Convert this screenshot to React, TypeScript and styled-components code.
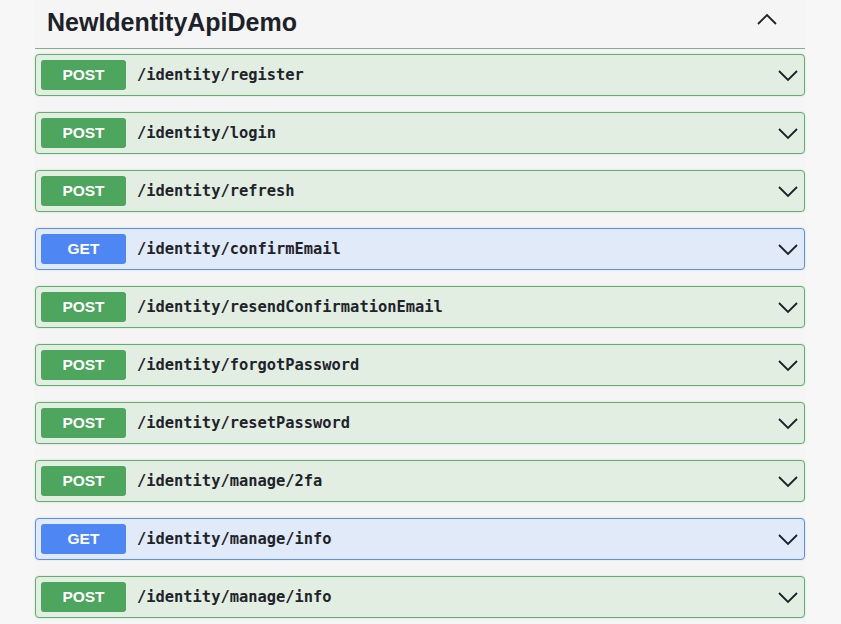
import React from "react";
import styled, { createGlobalStyle } from "styled-components";

const Global = createGlobalStyle`
  html, body { margin: 0; padding: 0; background: #f7f7f7; }
  body { font-family: "Liberation Sans", Arial, sans-serif; }
`;

const Page = styled.div`
  width: 841px;
  height: 624px;
  overflow: hidden;
  background: #f7f7f7;
`;

const Section = styled.div`
  margin-left: 35px;
  width: 770px;
  background: #f4f5f4;
  min-height: 624px;
`;

const Header = styled.div`
  height: 48px;
  display: flex;
  align-items: center;
  justify-content: space-between;
  border-bottom: 1px solid #86ad88;
  padding: 0 27px 0 12px;
  box-sizing: content-box;
`;

const Title = styled.h3`
  margin: 0;
  font-family: "Liberation Sans", Arial, sans-serif;
  font-weight: 700;
  font-size: 25px;
  color: #1d2129;
  position: relative;
  top: -2px;
`;

const List = styled.div`
  display: flex;
  flex-direction: column;
  gap: 16px;
  padding-top: 5px;
`;

const Row = styled.div<{ $get?: boolean }>`
  height: 42px;
  box-sizing: border-box;
  display: flex;
  align-items: center;
  padding: 0 5px;
  border: 1px solid ${(p) => (p.$get ? "#5b8ff2" : "#5fb06d")};
  background: ${(p) => (p.$get ? "#e1eaf8" : "#e2eee2")};
  border-radius: 4px;
  box-shadow: 0 0 2px rgba(0, 0, 0, 0.15);
`;

const Badge = styled.span<{ $get?: boolean }>`
  width: 85px;
  height: 30px;
  flex: none;
  display: flex;
  align-items: center;
  justify-content: center;
  border-radius: 3px;
  background: ${(p) => (p.$get ? "#4e86f3" : "#4ea55e")};
  color: #fff;
  font-family: "Liberation Sans", Arial, sans-serif;
  font-weight: 700;
  font-size: 15.5px;
`;

const Path = styled.span`
  margin-left: 11px;
  flex: 1;
  font-family: "DejaVu Sans Mono", monospace;
  font-weight: 700;
  font-size: 15.4px;
  color: #1f232b;
`;

const Chevron = styled.svg`
  flex: none;
  margin-right: 0px;
`;

const rows: { m: string; p: string }[] = [
  { m: "POST", p: "/identity/register" },
  { m: "POST", p: "/identity/login" },
  { m: "POST", p: "/identity/refresh" },
  { m: "GET", p: "/identity/confirmEmail" },
  { m: "POST", p: "/identity/resendConfirmationEmail" },
  { m: "POST", p: "/identity/forgotPassword" },
  { m: "POST", p: "/identity/resetPassword" },
  { m: "POST", p: "/identity/manage/2fa" },
  { m: "GET", p: "/identity/manage/info" },
  { m: "POST", p: "/identity/manage/info" },
];

export default function App() {
  return (
    <Page>
      <Global />
      <Section>
        <Header>
          <Title>NewIdentityApiDemo</Title>
          <svg width="22" height="20" viewBox="0 0 22 20" style={{ position: "relative", top: -4 }}>
            <path d="M2 14 L11 5 L20 14" fill="none" stroke="#1d2129" strokeWidth="1.8" />
          </svg>
        </Header>
        <List>
          {rows.map((r, i) => (
            <Row key={i} $get={r.m === "GET"}>
              <Badge $get={r.m === "GET"}>{r.m}</Badge>
              <Path>{r.p}</Path>
              <Chevron width="22" height="20" viewBox="0 0 22 20">
                <path d="M2 6 L11 15 L20 6" fill="none" stroke="#1d2129" strokeWidth="1.8" />
              </Chevron>
            </Row>
          ))}
        </List>
      </Section>
    </Page>
  );
}
